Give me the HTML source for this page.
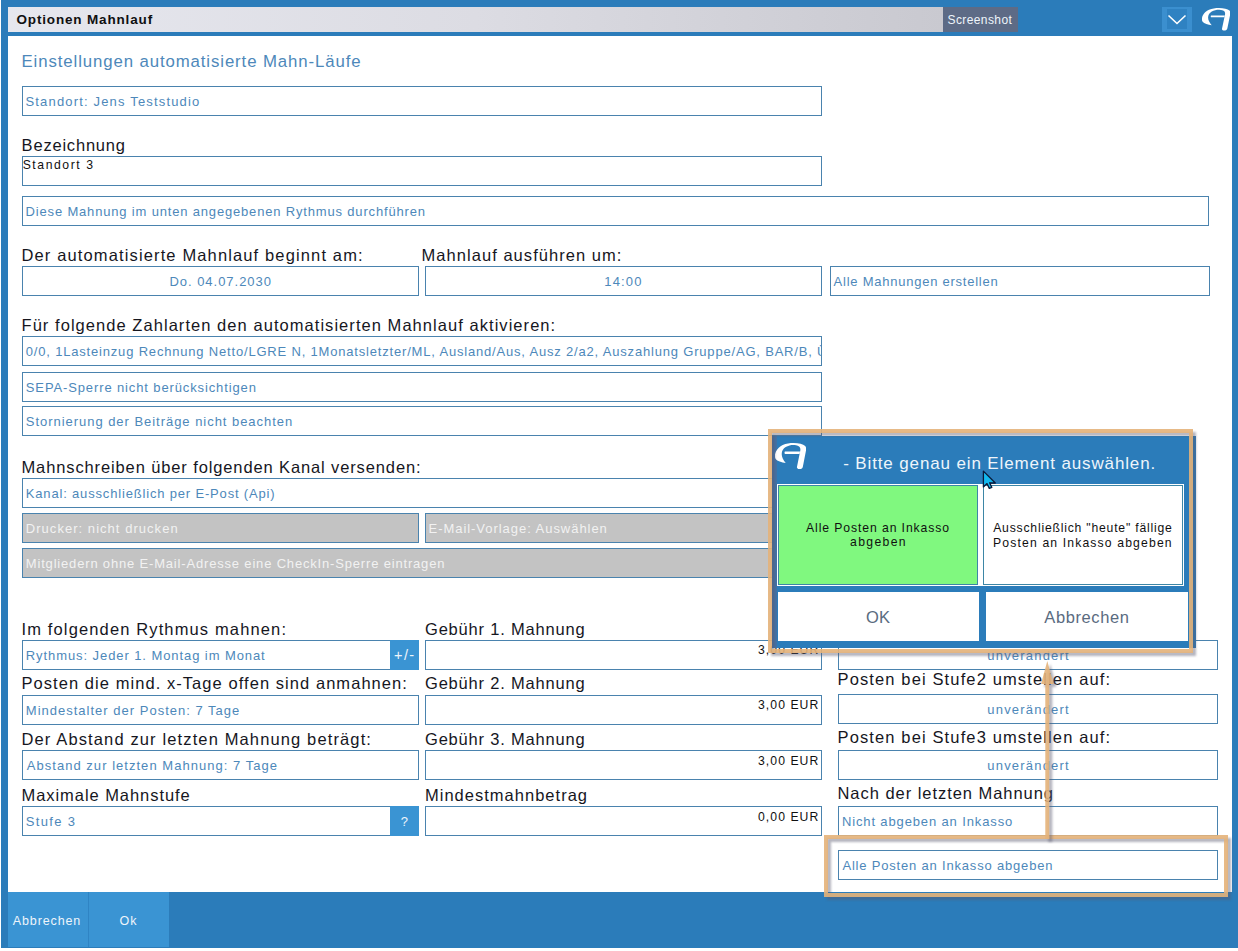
<!DOCTYPE html><html><head><meta charset="utf-8"><style>
*{margin:0;padding:0;box-sizing:border-box}
html,body{width:1238px;height:951px;overflow:hidden;background:#fff;position:relative;font-family:"Liberation Sans",sans-serif}
div{position:absolute}
.t{white-space:pre}
.bm{display:inline-block;width:0;height:0;vertical-align:baseline}
.in{border:1px solid #4a83ae;background:#fff}
.grey{border:1px solid #4a83ae;background:#c3c3c3}
</style></head><body>
<div style="left:1px;top:0;width:1237px;height:948px;background:#2b7cba"></div>
<div style="left:8px;top:7px;width:935px;height:25px;background:linear-gradient(90deg,#e6e7ee 0%,#dcdce3 50%,#c9c9d0 100%)"></div>
<div style="left:943px;top:7px;width:75px;height:25px;background:#5d6b86"></div>
<div style="left:1162px;top:7px;width:30px;height:25px;background:#3b8fcf"></div>
<div style="left:1167px;top:9px;width:20px;height:20px;background:#2f82c2"></div>
<svg style="position:absolute;left:1167px;top:14px" width="20" height="11" viewBox="0 0 20 11"><path d="M1.5 1.5L10 9.5L18.5 1.5" fill="none" stroke="#fff" stroke-width="1.6"/></svg>
<svg style="position:absolute;left:1202px;top:7.9px" width="28.3" height="22.7" viewBox="5.3 7 31.1 26.4" preserveAspectRatio="none" fill="#fff"><path d="M16 27C12 26.5 7.5 25 6 23C4.8 21 4.9 18.5 6.3 15.5C7.8 12.5 10 10.5 13 9C16.5 7.5 20 7 24 7C29 7 33.5 8 35.5 10C36.5 11.2 36.6 12.5 36.4 14L33.2 30.5C32.8 33.8 27.5 34 27.2 31.3L30.6 14.5C31 12 30 10.8 28.5 10C27 9.1 25.5 8.9 24 8.9C21 8.9 18.5 9.5 16 11C13.5 12.6 12 15 12 18C12 21 13.5 24 16 27Z"/><path d="M15.2 15.6L30.3 15.6L29.9 17.9L15.2 17.9C14.7 17.2 14.7 16.3 15.2 15.6Z"/></svg>
<div style="left:8px;top:36px;width:1224px;height:856px;background:#fff"></div>
<div style="left:8px;top:892px;width:80px;height:55px;background:#3a94d3"></div>
<div style="left:88px;top:892px;width:1px;height:55px;background:#2f84c4"></div>
<div style="left:89px;top:892px;width:80px;height:55px;background:#3a94d3"></div>
<div class="in" style="left:22px;top:86px;width:800px;height:30px"></div>
<div class="in" style="left:22px;top:156px;width:800px;height:30px"></div>
<div class="in" style="left:22px;top:196px;width:1187px;height:30px"></div>
<div class="in" style="left:22px;top:266px;width:397px;height:30px"></div>
<div class="in" style="left:425px;top:266px;width:397px;height:30px"></div>
<div class="in" style="left:830px;top:266px;width:380px;height:30px"></div>
<div class="in" style="left:22px;top:336px;width:800px;height:30px"></div>
<div class="in" style="left:22px;top:372px;width:800px;height:30px"></div>
<div class="in" style="left:22px;top:406px;width:800px;height:30px"></div>
<div class="in" style="left:22px;top:478px;width:800px;height:30px"></div>
<div class="grey" style="left:22px;top:513px;width:397px;height:30px"></div>
<div class="grey" style="left:425px;top:513px;width:397px;height:30px"></div>
<div class="grey" style="left:22px;top:548px;width:800px;height:30px"></div>
<div class="in" style="left:22px;top:640px;width:397px;height:30px"></div>
<div class="in" style="left:22px;top:695px;width:397px;height:30px"></div>
<div class="in" style="left:22px;top:750px;width:397px;height:30px"></div>
<div class="in" style="left:22px;top:806px;width:397px;height:30px"></div>
<div class="in" style="left:425px;top:640px;width:397px;height:30px"></div>
<div class="in" style="left:425px;top:695px;width:397px;height:30px"></div>
<div class="in" style="left:425px;top:750px;width:397px;height:30px"></div>
<div class="in" style="left:425px;top:806px;width:397px;height:30px"></div>
<div class="in" style="left:838px;top:640px;width:380px;height:30px"></div>
<div class="in" style="left:838px;top:694px;width:380px;height:30px"></div>
<div class="in" style="left:838px;top:750px;width:380px;height:30px"></div>
<div class="in" style="left:838px;top:806px;width:380px;height:30px"></div>
<div class="in" style="left:838px;top:850px;width:380px;height:30px"></div>
<div style="left:390px;top:640px;width:29px;height:30px;background:#3a94d3"></div>
<div style="left:390px;top:806px;width:29px;height:30px;background:#3a94d3"></div>
<div class="t" id="title" style="left:16.50px;top:12.20px;font-size:13.5px;line-height:16.2px;color:#101010;font-weight:700;letter-spacing:0.837px">Optionen Mahnlauf<span class="bm"></span></div>
<div class="t" id="shot" style="left:947.50px;top:13.20px;font-size:12px;line-height:14.4px;color:#eef5fb;font-weight:400;letter-spacing:0.400px">Screenshot<span class="bm"></span></div>
<div class="t" id="h1" style="left:21.50px;top:51.81px;font-size:16.8px;line-height:20.16px;color:#4d88ba;font-weight:400;letter-spacing:0.895px">Einstellungen automatisierte Mahn-Läufe<span class="bm"></span></div>
<div class="t" id="t1" style="left:25.50px;top:93.81px;font-size:13px;line-height:15.6px;color:#4d88ba;font-weight:400;letter-spacing:1.167px">Standort: Jens Teststudio<span class="bm"></span></div>
<div class="t" id="l1" style="left:21.60px;top:135.70px;font-size:16.5px;line-height:19.8px;color:#16161e;font-weight:400;letter-spacing:0.800px">Bezeichnung<span class="bm"></span></div>
<div class="t" id="t2" style="left:22.70px;top:158.40px;font-size:12.2px;line-height:14.64px;color:#101010;font-weight:400;letter-spacing:1.556px">Standort 3<span class="bm"></span></div>
<div class="t" id="t3" style="left:25.60px;top:204.00px;font-size:13px;line-height:15.6px;color:#4d88ba;font-weight:400;letter-spacing:0.826px">Diese Mahnung im unten angegebenen Rythmus durchführen<span class="bm"></span></div>
<div class="t" id="l2" style="left:21.50px;top:246.01px;font-size:16.5px;line-height:19.8px;color:#16161e;font-weight:400;letter-spacing:1.132px">Der automatisierte Mahnlauf beginnt am:<span class="bm"></span></div>
<div class="t" id="l3" style="left:421.50px;top:246.01px;font-size:16.5px;line-height:19.8px;color:#16161e;font-weight:400;letter-spacing:1.048px">Mahnlauf ausführen um:<span class="bm"></span></div>
<div class="t" id="t4" style="left:-279.30px;width:1000px;text-align:center;top:274.00px;font-size:13px;line-height:15.6px;color:#4d88ba;font-weight:400;letter-spacing:0.969px">Do. 04.07.2030<span class="bm"></span></div>
<div class="t" id="t5" style="left:123.50px;width:1000px;text-align:center;top:274.00px;font-size:13px;line-height:15.6px;color:#4d88ba;font-weight:400;letter-spacing:1.150px">14:00<span class="bm"></span></div>
<div class="t" id="t6" style="left:833.60px;top:274.00px;font-size:13px;line-height:15.6px;color:#4d88ba;font-weight:400;letter-spacing:0.757px">Alle Mahnungen erstellen<span class="bm"></span></div>
<div class="t" id="l4" style="left:21.50px;top:316.01px;font-size:16.5px;line-height:19.8px;color:#16161e;font-weight:400;letter-spacing:1.048px">Für folgende Zahlarten den automatisierten Mahnlauf aktivieren:<span class="bm"></span></div>
<div style="left:0;top:0;width:821px;height:951px;overflow:hidden">
<div class="t" id="t7" style="left:25.80px;top:344.00px;font-size:13px;line-height:15.6px;color:#4d88ba;font-weight:400;letter-spacing:0.813px">0/0, 1Lasteinzug Rechnung Netto/LGRE N, 1Monatsletzter/ML, Ausland/Aus, Ausz 2/a2, Auszahlung Gruppe/AG, BAR/B,<span class="sfx"> Überweisung</span><span class="bm"></span></div>
</div>
<div class="t" id="t8" style="left:25.80px;top:380.00px;font-size:13px;line-height:15.6px;color:#4d88ba;font-weight:400;letter-spacing:0.875px">SEPA-Sperre nicht berücksichtigen<span class="bm"></span></div>
<div class="t" id="t9" style="left:25.80px;top:414.00px;font-size:13px;line-height:15.6px;color:#4d88ba;font-weight:400;letter-spacing:0.963px">Stornierung der Beiträge nicht beachten<span class="bm"></span></div>
<div class="t" id="l5" style="left:21.50px;top:458.01px;font-size:16.5px;line-height:19.8px;color:#16161e;font-weight:400;letter-spacing:0.877px">Mahnschreiben über folgenden Kanal versenden:<span class="bm"></span></div>
<div class="t" id="t10" style="left:25.80px;top:486.00px;font-size:13px;line-height:15.6px;color:#4d88ba;font-weight:400;letter-spacing:0.827px">Kanal: ausschließlich per E-Post (Api)<span class="bm"></span></div>
<div class="t" id="t11" style="left:25.80px;top:521.00px;font-size:13px;line-height:15.6px;color:#f2f2f2;font-weight:400;letter-spacing:1.038px">Drucker: nicht drucken<span class="bm"></span></div>
<div class="t" id="t12" style="left:428.50px;top:521.00px;font-size:13px;line-height:15.6px;color:#f2f2f2;font-weight:400;letter-spacing:0.958px">E-Mail-Vorlage: Auswählen<span class="bm"></span></div>
<div class="t" id="t13" style="left:25.80px;top:556.00px;font-size:13px;line-height:15.6px;color:#f2f2f2;font-weight:400;letter-spacing:0.823px">Mitgliedern ohne E-Mail-Adresse eine CheckIn-Sperre eintragen<span class="bm"></span></div>
<div class="t" id="l6" style="left:21.50px;top:620.01px;font-size:16.5px;line-height:19.8px;color:#16161e;font-weight:400;letter-spacing:1.133px">Im folgenden Rythmus mahnen:<span class="bm"></span></div>
<div class="t" id="t14" style="left:25.80px;top:648.00px;font-size:13px;line-height:15.6px;color:#4d88ba;font-weight:400;letter-spacing:0.919px">Rythmus: Jeder 1. Montag im Monat<span class="bm"></span></div>
<div class="t" id="b1" style="left:-95.20px;width:1000px;text-align:center;top:647.00px;font-size:14.5px;line-height:17.4px;color:#eef5fb;font-weight:400;letter-spacing:1.400px">+/-<span class="bm"></span></div>
<div class="t" id="l7" style="left:21.50px;top:674.01px;font-size:16.5px;line-height:19.8px;color:#16161e;font-weight:400;letter-spacing:1.056px">Posten die mind. x-Tage offen sind anmahnen:<span class="bm"></span></div>
<div class="t" id="t15" style="left:25.80px;top:703.00px;font-size:13px;line-height:15.6px;color:#4d88ba;font-weight:400;letter-spacing:1.007px">Mindestalter der Posten: 7 Tage<span class="bm"></span></div>
<div class="t" id="l8" style="left:21.50px;top:730.01px;font-size:16.5px;line-height:19.8px;color:#16161e;font-weight:400;letter-spacing:1.128px">Der Abstand zur letzten Mahnung beträgt:<span class="bm"></span></div>
<div class="t" id="t16" style="left:26.80px;top:758.00px;font-size:13px;line-height:15.6px;color:#4d88ba;font-weight:400;letter-spacing:1.029px">Abstand zur letzten Mahnung: 7 Tage<span class="bm"></span></div>
<div class="t" id="l9" style="left:21.50px;top:786.01px;font-size:16.5px;line-height:19.8px;color:#16161e;font-weight:400;letter-spacing:0.941px">Maximale Mahnstufe<span class="bm"></span></div>
<div class="t" id="t17" style="left:25.80px;top:814.00px;font-size:13px;line-height:15.6px;color:#4d88ba;font-weight:400;letter-spacing:1.333px">Stufe 3<span class="bm"></span></div>
<div class="t" id="b2" style="left:-95.70px;width:1000px;text-align:center;top:814.00px;font-size:13px;line-height:15.6px;color:#eef5fb;font-weight:400;letter-spacing:0.000px">?<span class="bm"></span></div>
<div class="t" id="g1" style="left:425.00px;top:620.01px;font-size:16.5px;line-height:19.8px;color:#16161e;font-weight:400;letter-spacing:0.800px">Gebühr 1. Mahnung<span class="bm"></span></div>
<div class="t" id="g2" style="left:425.00px;top:674.01px;font-size:16.5px;line-height:19.8px;color:#16161e;font-weight:400;letter-spacing:0.800px">Gebühr 2. Mahnung<span class="bm"></span></div>
<div class="t" id="g3" style="left:425.00px;top:730.01px;font-size:16.5px;line-height:19.8px;color:#16161e;font-weight:400;letter-spacing:0.800px">Gebühr 3. Mahnung<span class="bm"></span></div>
<div class="t" id="g4" style="left:425.00px;top:786.01px;font-size:16.5px;line-height:19.8px;color:#16161e;font-weight:400;letter-spacing:1.012px">Mindestmahnbetrag<span class="bm"></span></div>
<div class="t" id="e1" style="left:-180.70px;width:1000px;text-align:right;top:643.00px;font-size:12.2px;line-height:14.64px;color:#101010;font-weight:400;letter-spacing:1.057px">3,00 EUR<span class="bm"></span></div>
<div class="t" id="e2" style="left:-180.70px;width:1000px;text-align:right;top:698.00px;font-size:12.2px;line-height:14.64px;color:#101010;font-weight:400;letter-spacing:1.057px">3,00 EUR<span class="bm"></span></div>
<div class="t" id="e3" style="left:-180.70px;width:1000px;text-align:right;top:753.50px;font-size:12.2px;line-height:14.64px;color:#101010;font-weight:400;letter-spacing:1.057px">3,00 EUR<span class="bm"></span></div>
<div class="t" id="e4" style="left:-180.70px;width:1000px;text-align:right;top:809.50px;font-size:12.2px;line-height:14.64px;color:#101010;font-weight:400;letter-spacing:1.057px">0,00 EUR<span class="bm"></span></div>
<div class="t" id="r0" style="left:837.50px;top:616.01px;font-size:16.5px;line-height:19.8px;color:#16161e;font-weight:400;letter-spacing:1.129px">Posten bei Stufe1 umstellen auf:<span class="bm"></span></div>
<div class="t" id="u1" style="left:528.60px;width:1000px;text-align:center;top:648.00px;font-size:13px;line-height:15.6px;color:#4d88ba;font-weight:400;letter-spacing:1.200px">unverändert<span class="bm"></span></div>
<div class="t" id="r1" style="left:837.50px;top:670.01px;font-size:16.5px;line-height:19.8px;color:#16161e;font-weight:400;letter-spacing:1.129px">Posten bei Stufe2 umstellen auf:<span class="bm"></span></div>
<div class="t" id="u2" style="left:528.60px;width:1000px;text-align:center;top:702.00px;font-size:13px;line-height:15.6px;color:#4d88ba;font-weight:400;letter-spacing:1.200px">unverändert<span class="bm"></span></div>
<div class="t" id="r2" style="left:837.50px;top:728.01px;font-size:16.5px;line-height:19.8px;color:#16161e;font-weight:400;letter-spacing:1.129px">Posten bei Stufe3 umstellen auf:<span class="bm"></span></div>
<div class="t" id="u3" style="left:528.60px;width:1000px;text-align:center;top:758.00px;font-size:13px;line-height:15.6px;color:#4d88ba;font-weight:400;letter-spacing:1.200px">unverändert<span class="bm"></span></div>
<div class="t" id="r3" style="left:837.50px;top:784.01px;font-size:16.5px;line-height:19.8px;color:#16161e;font-weight:400;letter-spacing:0.957px">Nach der letzten Mahnung<span class="bm"></span></div>
<div class="t" id="t18" style="left:841.90px;top:814.00px;font-size:13px;line-height:15.6px;color:#4d88ba;font-weight:400;letter-spacing:0.870px">Nicht abgeben an Inkasso<span class="bm"></span></div>
<div class="t" id="t19" style="left:842.40px;top:858.00px;font-size:13px;line-height:15.6px;color:#4d88ba;font-weight:400;letter-spacing:0.814px">Alle Posten an Inkasso abgeben<span class="bm"></span></div>
<div class="t" id="bb1" style="left:-453.00px;width:1000px;text-align:center;top:914.00px;font-size:12.5px;line-height:15.0px;color:#eef5fb;font-weight:400;letter-spacing:0.875px">Abbrechen<span class="bm"></span></div>
<div class="t" id="bb2" style="left:-371.50px;width:1000px;text-align:center;top:914.00px;font-size:12.5px;line-height:15.0px;color:#eef5fb;font-weight:400;letter-spacing:1.000px">Ok<span class="bm"></span></div>
<div style="left:772px;top:436px;width:424px;height:212px;background:#2b7cba"></div>
<div style="left:772px;top:436px;width:5px;height:212px;background:#4272a6"></div>
<svg style="position:absolute;left:775.3px;top:443px" width="31.1" height="26.4" viewBox="5.3 7 31.1 26.4" preserveAspectRatio="none" fill="#fff"><path d="M16 27C12 26.5 7.5 25 6 23C4.8 21 4.9 18.5 6.3 15.5C7.8 12.5 10 10.5 13 9C16.5 7.5 20 7 24 7C29 7 33.5 8 35.5 10C36.5 11.2 36.6 12.5 36.4 14L33.2 30.5C32.8 33.8 27.5 34 27.2 31.3L30.6 14.5C31 12 30 10.8 28.5 10C27 9.1 25.5 8.9 24 8.9C21 8.9 18.5 9.5 16 11C13.5 12.6 12 15 12 18C12 21 13.5 24 16 27Z"/><path d="M15.2 15.6L30.3 15.6L29.9 17.9L15.2 17.9C14.7 17.2 14.7 16.3 15.2 15.6Z"/></svg>
<div style="left:777px;top:484px;width:407px;height:102px;background:#fff"></div>
<div style="left:778px;top:485px;width:200px;height:100px;background:#80f87f;border:1px solid #3d86a6"></div>
<div style="left:983px;top:485px;width:200px;height:100px;background:#fff;border:1px solid #3d86a6"></div>
<div style="left:778px;top:592px;width:201px;height:49px;background:#fff"></div>
<div style="left:986px;top:592px;width:202px;height:49px;background:#fff"></div>
<div class="t" id="p1" style="left:843.20px;top:454.01px;font-size:17px;line-height:20.4px;color:#eef5fb;font-weight:400;letter-spacing:0.869px">- Bitte genau ein Element auswählen.<span class="bm"></span></div>
<div class="t" id="p2" style="left:378.00px;width:1000px;text-align:center;top:521.40px;font-size:12.2px;line-height:14.64px;color:#101010;font-weight:400;letter-spacing:0.905px">Alle Posten an Inkasso<span class="bm"></span></div>
<div class="t" id="p3" style="left:378.50px;width:1000px;text-align:center;top:535.40px;font-size:12.2px;line-height:14.64px;color:#101010;font-weight:400;letter-spacing:1.333px">abgeben<span class="bm"></span></div>
<div class="t" id="p4" style="left:582.90px;width:1000px;text-align:center;top:521.40px;font-size:12.2px;line-height:14.64px;color:#101010;font-weight:400;letter-spacing:0.793px">Ausschließlich &quot;heute&quot; fällige<span class="bm"></span></div>
<div class="t" id="p5" style="left:582.90px;width:1000px;text-align:center;top:535.50px;font-size:12.2px;line-height:14.64px;color:#101010;font-weight:400;letter-spacing:1.142px">Posten an Inkasso abgeben<span class="bm"></span></div>
<div class="t" id="p6" style="left:378.00px;width:1000px;text-align:center;top:608.01px;font-size:16.5px;line-height:19.8px;color:#5a6b7f;font-weight:400;letter-spacing:0.000px">OK<span class="bm"></span></div>
<div class="t" id="p7" style="left:586.90px;width:1000px;text-align:center;top:608.01px;font-size:16.5px;line-height:19.8px;color:#5a6b7f;font-weight:400;letter-spacing:0.600px">Abbrechen<span class="bm"></span></div>
<svg style="position:absolute;left:981px;top:469px" width="18" height="22" viewBox="0 0 18 22"><path d="M2.4 2.1L2.4 17.9L6 14.6L8.3 19.4L10.8 18.4L8.6 13.8L14.3 14Z" fill="#13b8ef" stroke="#0a1a3a" stroke-width="1.3" stroke-linejoin="round"/></svg>
<div style="left:768px;top:429px;width:425px;height:224px;border:4px solid rgba(228,178,122,.9);filter:drop-shadow(3px 3px 1.2px rgba(90,90,112,.5))"></div>
<div style="left:824px;top:835px;width:404px;height:62px;border:4px solid rgba(228,178,122,.9);filter:drop-shadow(3px 3px 1.2px rgba(90,90,112,.5))"></div>
<svg style="position:absolute;left:1030px;top:655px;filter:drop-shadow(3px 3px 1.2px rgba(90,90,112,.5))" width="30" height="190" viewBox="0 0 30 190"><path d="M17.3 6L23.5 29H19.3V184H15.3V29H11Z" fill="rgba(228,178,122,.9)"/></svg>
</body></html>
